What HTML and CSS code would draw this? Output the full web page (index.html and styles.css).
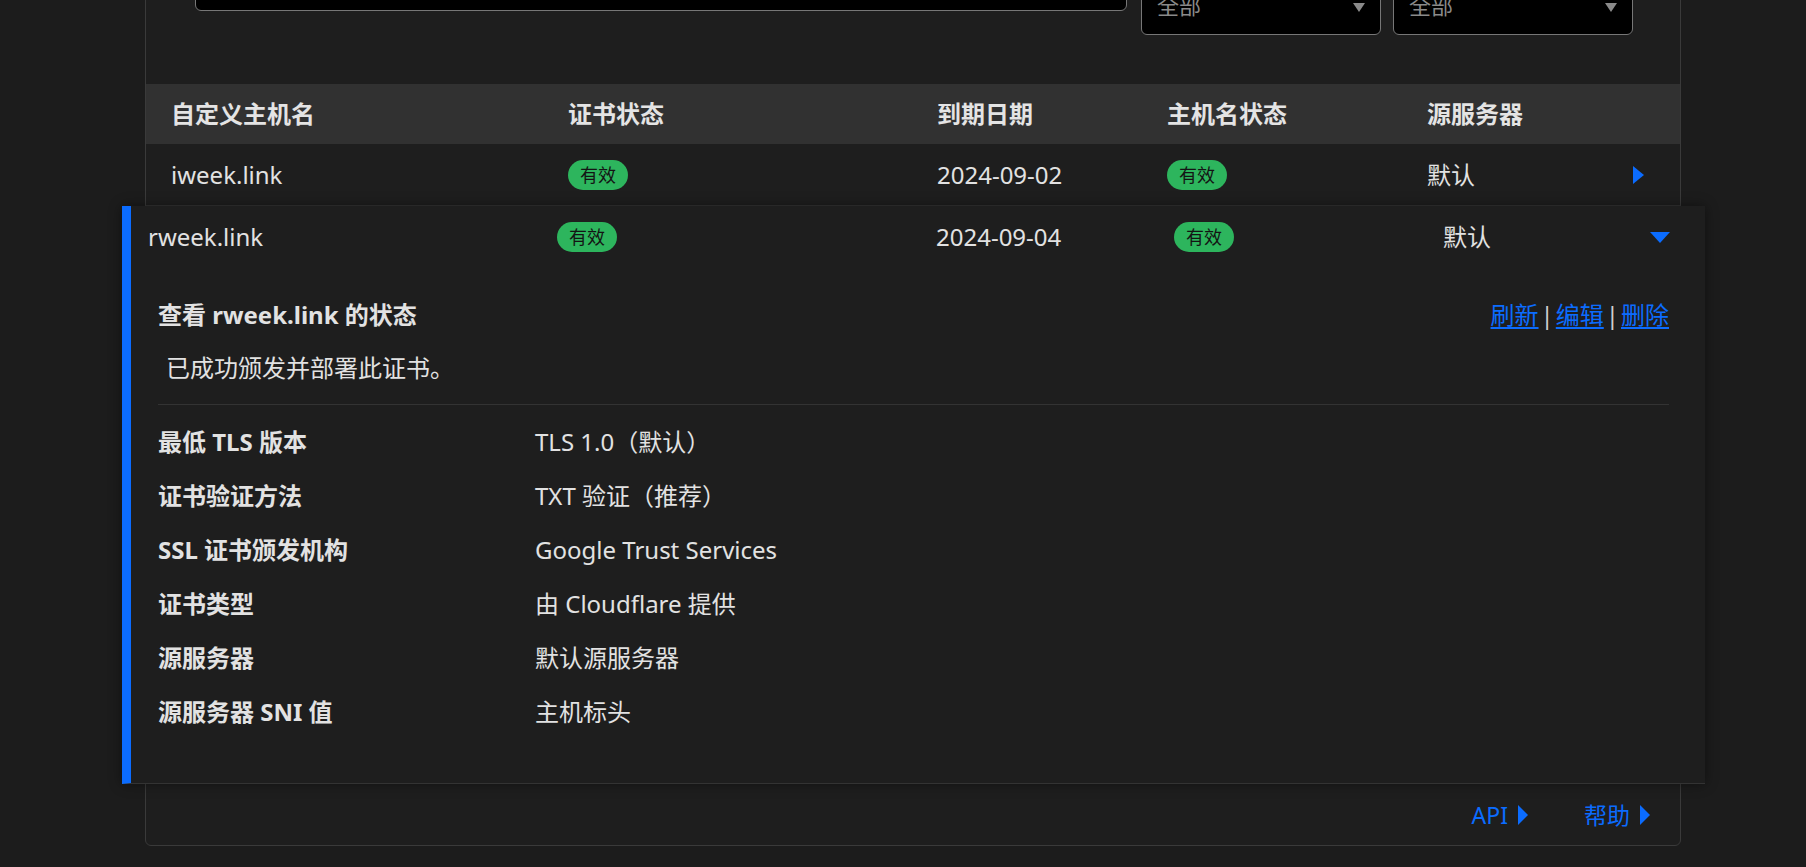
FILE: index.html
```html
<!DOCTYPE html>
<html lang="zh-CN">
<head>
<meta charset="utf-8">
<title>自定义主机名</title>
<link rel="stylesheet" href="styles.css">
</head>
<body>
<div class="card">
  <div class="filters">
    <div class="search"></div>
    <div class="select"><span>全部</span><i class="caret"></i></div>
    <div class="select second"><span>全部</span><i class="caret"></i></div>
  </div>

  <div class="table">
    <div class="thead grid-a">
      <div>自定义主机名</div>
      <div>证书状态</div>
      <div>到期日期</div>
      <div>主机名状态</div>
      <div>源服务器</div>
      <div></div>
    </div>
    <div class="trow grid-a">
      <div>iweek.link</div>
      <div><span class="badge">有效</span></div>
      <div>2024-09-02</div>
      <div><span class="badge">有效</span></div>
      <div>默认</div>
      <div><i class="tri-right"></i></div>
    </div>

    <div class="expanded">
      <div class="erow grid-b">
        <div>rweek.link</div>
        <div><span class="badge">有效</span></div>
        <div>2024-09-04</div>
        <div><span class="badge">有效</span></div>
        <div>默认</div>
        <div><i class="tri-down"></i></div>
      </div>
      <div class="detail">
        <div class="detail-head">
          <div class="detail-title">查看 rweek.link 的状态</div>
          <div class="actions">
            <a href="#">刷新</a><span class="sep">|</span><a href="#">编辑</a><span class="sep">|</span><a href="#">删除</a>
          </div>
        </div>
        <div class="detail-msg">已成功颁发并部署此证书。</div>
        <div class="detail-rule"></div>
        <div class="props">
          <div class="label">最低 TLS 版本</div><div class="value">TLS 1.0（默认）</div>
          <div class="label">证书验证方法</div><div class="value">TXT 验证（推荐）</div>
          <div class="label">SSL 证书颁发机构</div><div class="value">Google Trust Services</div>
          <div class="label">证书类型</div><div class="value">由 Cloudflare 提供</div>
          <div class="label">源服务器</div><div class="value">默认源服务器</div>
          <div class="label">源服务器 SNI 值</div><div class="value">主机标头</div>
        </div>
      </div>
    </div>
  </div>

  <div class="footer">
    <a href="#" class="flink">API<i class="tri-right small"></i></a>
    <a href="#" class="flink">帮助<i class="tri-right small"></i></a>
  </div>
</div>
</body>
</html>
```

FILE: styles.css
```css
* { box-sizing: border-box; }

html, body {
  margin: 0;
  padding: 0;
  background: #1c1c1c;
  height: 100%;
  overflow: hidden;
}

body {
  font-family: "Noto Sans", "Noto Sans CJK SC", sans-serif;
  font-size: 24px;
  color: #e2e2e2;
}

.card {
  width: 1536px;
  margin: -60px 0 0 145px;
  background: #1e1e1e;
  border: 1px solid #3a3a3a;
  border-radius: 6px;
  padding-top: 24px;
}

.filters {
  display: flex;
  align-items: flex-start;
  padding: 0 47px 0 49px;
}

.search {
  width: 932px;
  height: 46px;
  background: #000;
  border: 1px solid #777;
  border-radius: 6px;
}

.select {
  width: 240px;
  height: 60px;
  margin-top: 10px;
  margin-left: 14px;
  background: #000;
  border: 1px solid #777;
  border-radius: 6px;
  display: flex;
  align-items: center;
  justify-content: space-between;
  padding: 0 15px 0 15px;
  color: #8a8a8a;
  font-size: 22px;
  line-height: 30px;
}

.select.second { margin-left: 12px; }

.caret {
  width: 0;
  height: 0;
  border-left: 6.5px solid transparent;
  border-right: 6.5px solid transparent;
  border-top: 9px solid #8a8a8a;
  margin-top: 4px;
}

.table { margin-top: 49px; }

.grid-a {
  display: grid;
  grid-template-columns: 397px 369px 230px 260px 206px 11px 1fr;
  padding-left: 25px;
  align-items: center;
}

.grid-b {
  display: grid;
  grid-template-columns: 409px 379px 238px 269px 207px 20px 1fr;
  padding-left: 17px;
  align-items: center;
}

.thead {
  height: 60px;
  background: #313131;
  font-weight: 700;
  color: #e4e4e4;
  line-height: 30px;
}

.trow {
  height: 62px;
  border-bottom: 1px solid #333;
  line-height: 30px;
}

.trow > div, .erow > div { display: flex; align-items: center; }

.badge {
  display: inline-flex;
  align-items: center;
  height: 30px;
  padding: 0 12px;
  border-radius: 15px;
  background: #2db55d;
  color: #141414;
  font-size: 18px;
  line-height: 30px;
}

.tri-right {
  display: block;
  width: 0;
  height: 0;
  border-top: 9.5px solid transparent;
  border-bottom: 9.5px solid transparent;
  border-left: 11px solid #0b6cff;
}

.tri-right.small {
  border-top-width: 10px;
  border-bottom-width: 10px;
  border-left-width: 10px;
  margin-left: 10px;
}

.tri-down {
  display: block;
  width: 0;
  height: 0;
  border-left: 10px solid transparent;
  border-right: 10px solid transparent;
  border-top: 11px solid #0b6cff;
}

.expanded {
  position: relative;
  z-index: 1;
  margin: 0 -25px 0 -24px;
  background: #1e1e1e;
  border-left: 9px solid #0b6cff;
  border-bottom: 1px solid #333;
  box-shadow: 0 0 12px rgba(0, 0, 0, 0.45);
}

.erow {
  height: 62px;
  line-height: 30px;
}

.detail {
  padding: 30px 36px 54px 27px;
}

.detail-head {
  display: flex;
  justify-content: space-between;
  align-items: center;
  line-height: 34px;
}

.detail-title { font-weight: 700; }

.actions { display: flex; align-items: center; }

.actions a {
  color: #0b6cff;
  text-decoration: underline;
  text-underline-offset: 3px;
}

.sep {
  color: #d0d0d0;
  padding: 0 2px;
}

.detail-msg {
  margin-top: 19px;
  padding-left: 8px;
  line-height: 34px;
}

.detail-rule {
  margin-top: 19px;
  border-top: 1px solid #333;
}

.props {
  margin-top: 20px;
  display: grid;
  grid-template-columns: 377px 1fr;
  row-gap: 20px;
  line-height: 34px;
}

.props .label { font-weight: 700; }

.footer {
  height: 61px;
  display: flex;
  justify-content: flex-end;
  align-items: center;
  gap: 56px;
  padding-right: 30px;
}

.flink {
  display: flex;
  align-items: center;
  color: #0b6cff;
  text-decoration: none;
  font-size: 23px;
  line-height: 30px;
}
```
